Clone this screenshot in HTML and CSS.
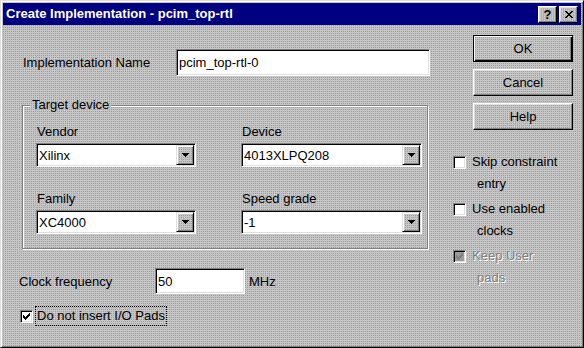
FILE: index.html
```html
<!DOCTYPE html>
<html>
<head>
<meta charset="utf-8">
<link rel="stylesheet" href="styles.css">
</head>
<body>
<div class="window dither">
  <div class="titlebar">
    <span class="title">Create Implementation - pcim_top-rtl</span>
    <div class="tbtns">
      <span class="tbtn dither q">?</span>
      <span class="tbtn dither"><svg width="8" height="7" viewBox="0 0 8 7" shape-rendering="crispEdges"><path d="M0 0h2v1H0z M6 0h2v1H6z M1 1h2v1H1z M5 1h2v1H5z M2 2h4v1H2z M3 3h2v1H3z M2 4h4v1H2z M1 5h2v1H1z M5 5h2v1H5z M0 6h2v1H0z M6 6h2v1H6z" fill="#000"/></svg></span>
    </div>
  </div>
  <div class="content">
    <div class="left">
      <div class="name-row">
        <span class="name-lbl">Implementation Name</span>
        <div class="field-box name-input">pcim_top-rtl-0</div>
      </div>
      <div class="group">
        <span class="legend dither">Target device</span>
        <div class="fld">
          <div class="lbl">Vendor</div>
          <div class="select"><span class="val">Xilinx</span><span class="arrow dither"><svg width="7" height="4" viewBox="0 0 7 4" shape-rendering="crispEdges"><path d="M0 0h7v1H0z M1 1h5v1H1z M2 2h3v1H2z M3 3h1v1H3z" fill="#000"/></svg></span></div>
        </div>
        <div class="fld">
          <div class="lbl">Device</div>
          <div class="select"><span class="val">4013XLPQ208</span><span class="arrow dither"><svg width="7" height="4" viewBox="0 0 7 4" shape-rendering="crispEdges"><path d="M0 0h7v1H0z M1 1h5v1H1z M2 2h3v1H2z M3 3h1v1H3z" fill="#000"/></svg></span></div>
        </div>
        <div class="fld">
          <div class="lbl">Family</div>
          <div class="select"><span class="val">XC4000</span><span class="arrow dither"><svg width="7" height="4" viewBox="0 0 7 4" shape-rendering="crispEdges"><path d="M0 0h7v1H0z M1 1h5v1H1z M2 2h3v1H2z M3 3h1v1H3z" fill="#000"/></svg></span></div>
        </div>
        <div class="fld">
          <div class="lbl">Speed grade</div>
          <div class="select"><span class="val">-1</span><span class="arrow dither"><svg width="7" height="4" viewBox="0 0 7 4" shape-rendering="crispEdges"><path d="M0 0h7v1H0z M1 1h5v1H1z M2 2h3v1H2z M3 3h1v1H3z" fill="#000"/></svg></span></div>
        </div>
      </div>
      <div class="clock-row">
        <span class="clock-lbl">Clock frequency</span>
        <div class="field-box clock-input">50</div>
        <span class="mhz">MHz</span>
      </div>
      <div class="chk-row">
        <span class="chk"><svg width="13" height="13" viewBox="0 0 13 13" shape-rendering="crispEdges"><path d="M3 5h1v3H3z M4 6h1v3H4z M5 7h1v3H5z M6 6h1v3H6z M7 5h1v3H7z M8 4h1v3H8z M9 3h1v3H9z" fill="#000"/></svg></span>
        <span class="focus">Do not insert I/O Pads</span>
      </div>
    </div>
    <div class="right">
      <div class="btn ok">OK</div>
      <div class="btn">Cancel</div>
      <div class="btn">Help</div>
      <div class="checks">
        <div class="citem">
          <span class="chk"></span>
          <span>Skip constraint</span>
          <span class="cont">entry</span>
        </div>
        <div class="citem">
          <span class="chk"></span>
          <span>Use enabled</span>
          <span class="cont">clocks</span>
        </div>
        <div class="citem disabled">
          <span class="chk dis dither"><svg width="13" height="13" viewBox="0 0 13 13" shape-rendering="crispEdges"><path d="M3 5h1v3H3z M4 6h1v3H4z M5 7h1v3H5z M6 6h1v3H6z M7 5h1v3H7z M8 4h1v3H8z M9 3h1v3H9z" fill="#808080"/></svg></span>
          <span>Keep User</span>
          <span class="cont">pads</span>
        </div>
      </div>
    </div>
  </div>
</div>
</body>
</html>
```

FILE: styles.css
```css
* { box-sizing: border-box; }
html, body { margin: 0; padding: 0; }
body {
  width: 584px;
  height: 348px;
  overflow: hidden;
  font-family: "Liberation Sans", Arial, sans-serif;
  font-size: 13px;
  color: #000;
  background: #c0c0c0;
}
.dither {
  background-color: #9c9c9c;
  background-image:
    linear-gradient(90deg, #c6c6c6 50%, transparent 50%),
    linear-gradient(#c6c6c6 50%, transparent 50%);
  background-size: 2px 2px;
  background-attachment: fixed;
}
.window {
  width: 584px;
  height: 348px;
  border: 1px solid;
  border-color: #dfdfdf #000 #000 #dfdfdf;
  box-shadow: inset 1px 1px #fff, inset -1px -1px #808080;
  padding: 2px;
  display: flex;
  flex-direction: column;
}
.titlebar {
  height: 22px;
  flex-shrink: 0;
  background: #000080;
  display: flex;
  align-items: center;
  justify-content: space-between;
  padding: 0 3px 0 3px;
}
.title {
  color: #fff;
  font-weight: bold;
  font-size: 13px;
  line-height: 16px;
}
.tbtns { display: flex; gap: 2px; }
.tbtn {
  width: 19px;
  height: 17px;
  border: 1px solid;
  border-color: #fff #000 #000 #fff;
  box-shadow: inset -1px -1px #808080, inset 1px 1px #dfdfdf;
  display: flex;
  align-items: center;
  justify-content: center;
}
.tbtn.q { font-weight: bold; font-size: 13px; line-height: 13px; }
.content {
  flex: 1;
  display: flex;
  padding-left: 16px;
}
.left {
  width: 412px;
  display: flex;
  flex-direction: column;
}
.name-row {
  margin-top: 24px;
  margin-left: 4px;
  display: flex;
  align-items: center;
}
.name-lbl { width: 153px; }
.field-box {
  background: #fff;
  border: 1px solid;
  border-color: #808080 #fff #fff #808080;
  box-shadow: inset 1px 1px #000, inset -1px -1px #dfdfdf;
  display: flex;
  align-items: center;
  padding-left: 2px;
}
.name-input { width: 254px; height: 27px; }
.group {
  position: relative;
  margin-top: 29px;
  margin-left: 3px;
  width: 406px;
  border: 1px solid #808080;
  box-shadow: inset 1px 1px #fff, 1px 1px #fff;
  padding: 18px 5px 14px 13px;
  display: grid;
  grid-template-columns: 160px 181px;
  column-gap: 45px;
  row-gap: 24px;
}
.legend {
  position: absolute;
  top: -9px;
  left: 7px;
  padding: 0 2px;
  line-height: 16px;
}
.lbl {
  padding-left: 1px;
  line-height: 16px;
  margin-bottom: 3px;
}
.select {
  height: 24px;
  display: flex;
  background: #fff;
  border: 1px solid;
  border-color: #808080 #fff #fff #808080;
  box-shadow: inset 1px 1px #000, inset -1px -1px #dfdfdf;
  padding: 1px;
}
.val {
  flex: 1;
  display: flex;
  align-items: center;
  padding-left: 1px;
}
.arrow {
  width: 18px;
  border: 1px solid;
  border-color: #dfdfdf #000 #000 #dfdfdf;
  box-shadow: inset 1px 1px #fff, inset -1px -1px #808080;
  display: flex;
  align-items: center;
  justify-content: center;
}
.clock-row {
  margin-top: 19px;
  display: flex;
  align-items: center;
}
.clock-lbl { width: 136px; }
.clock-input { width: 90px; height: 26px; }
.mhz { margin-left: 4px; }
.chk-row {
  margin-top: 12px;
  display: flex;
  align-items: center;
}
.chk {
  width: 13px;
  height: 13px;
  background: #fff;
  border: 1px solid;
  border-color: #808080 #fff #fff #808080;
  box-shadow: inset 1px 1px #000, inset -1px -1px #dfdfdf;
  position: relative;
  display: block;
}
.chk svg { position: absolute; left: -1px; top: -1px; }
.chk-row .chk { margin-left: 1px; }
.focus {
  margin-left: 2px;
  border: 1px dotted #000;
  padding: 0 1px;
  line-height: 18px;
}
.right {
  margin-left: 22px;
  width: 120px;
  display: flex;
  flex-direction: column;
}
.btn {
  margin-left: 20px;
  width: 100px;
  height: 27px;
  border: 1px solid;
  border-color: #fff #000 #000 #fff;
  box-shadow: inset -1px -1px #808080, inset 1px 1px #dfdfdf;
  display: flex;
  align-items: center;
  justify-content: center;
}
.btn.ok {
  margin-top: 10px;
  border-color: #000;
  box-shadow: inset 1px 1px #fff, inset -1px -1px #000, inset -2px -2px #808080;
}
.btn + .btn { margin-top: 7px; }
.checks {
  margin-top: 21px;
  display: flex;
  flex-direction: column;
  gap: 3px;
}
.citem {
  display: grid;
  grid-template-columns: 19px auto;
  line-height: 22px;
  align-items: center;
}
.cont { grid-column: 2; padding-left: 5px; }
.chk.dis { background-color: #9c9c9c; }
.disabled span:not(.chk) {
  color: #808080;
  text-shadow: 1px 1px #fff;
}
```
